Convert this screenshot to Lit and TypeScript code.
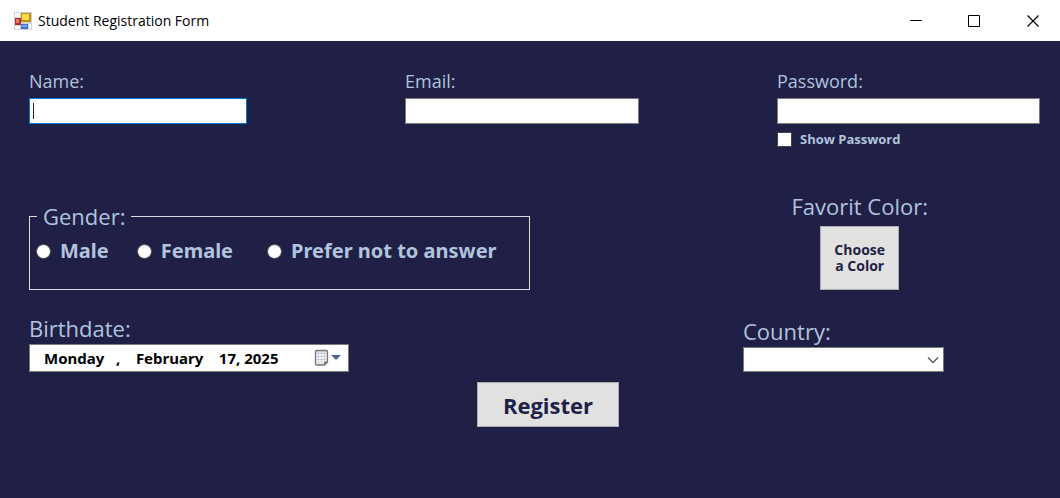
import { LitElement, html, css, svg } from "lit";
import { customElement, state } from "lit/decorators.js";

const formIcon = svg`
  <rect x="0" y="0" width="18" height="18" fill="#d2d2d2"/>
  <rect x="1" y="1" width="5" height="4" fill="#fff"/>
  <rect x="1" y="14" width="5" height="3" fill="#fff"/>
  <rect x="15" y="12" width="2" height="5" fill="#fff"/>
  <rect x="1" y="6" width="6" height="7" fill="#b03030"/>
  <rect x="2" y="7" width="3" height="4" fill="#e08070"/>
  <rect x="7" y="1" width="10" height="9" fill="#c09010"/>
  <rect x="8" y="2" width="7" height="6" fill="#fbd850"/>
  <rect x="7" y="12" width="7" height="5" fill="#4272cc"/>
  <rect x="8" y="13" width="5" height="2" fill="#7ba4ee"/>`;

@customElement("app-root")
export class AppRoot extends LitElement {
  @state() private showPassword = false;

  static styles = css`
    :host {
      display: flex;
      flex-direction: column;
      min-height: 100vh;
      background: #201f45;
      color: #b0c4de;
      font-family: "Open Sans", "Noto Sans", sans-serif;
    }
    * { box-sizing: border-box; }
    button, input, select { font: inherit; margin: 0; border-radius: 0; }
    .titlebar {
      display: flex;
      align-items: center;
      height: 41px;
      padding-left: 14px;
      background: #fff;
      color: #000;
    }
    .app-icon { width: 18px; height: 18px; margin-right: 6px; }
    .title {
      flex: 1;
      margin: 0;
      font-size: 14px;
      font-weight: 400;
      line-height: 20px;
    }
    .window-button {
      display: grid;
      place-items: center;
      width: 58px;
      height: 40px;
      padding: 0;
      border: 0;
      background: none;
    }
    .window-button:last-child { width: 57px; padding-left: 3px; }
    form {
      display: flex;
      flex-direction: column;
      padding: 28px 20px 24px 29px;
    }
    .accounts {
      display: grid;
      grid-template-columns: 376fr 372fr 263fr;
      margin-bottom: 41px;
    }
    .field { display: flex; flex-direction: column; align-items: flex-start; }
    .label { font-size: 18px; line-height: 24px; margin-bottom: 5px; }
    .large { font-size: 22px; line-height: 28px; margin-bottom: 2px; }
    .box {
      width: 100%;
      height: 26px;
      padding: 0 4px;
      border: 1px solid #7a7a7a;
      background: #fff;
      color: #000;
      outline: none;
    }
    .name { width: 58%; }
    .email { width: 63%; }
    .active {
      border-color: #0078d7;
      background: linear-gradient(#222, #222) 3px 4px / 1px 16px no-repeat #fff;
    }
    .check {
      display: flex;
      align-items: center;
      gap: 8px;
      height: 24px;
      margin-top: 3px;
      font-size: 13px;
      font-weight: 700;
    }
    .check input, .radio input {
      appearance: none;
      width: 15px;
      height: 15px;
      border: 1px solid #444;
      background: #fff;
    }
    .check input:checked { background: #b0c4de; }
    .row {
      display: flex;
      justify-content: space-between;
      align-items: flex-end;
    }
    .gender {
      width: 501px;
      min-width: 0;
      height: 88px;
      margin: 0;
      padding: 0 6px;
      border: 1px solid #dcdcdc;
    }
    .gender legend {
      margin-left: 1px;
      padding: 0 6px;
      font-size: 22px;
      line-height: 28px;
    }
    .options { display: flex; gap: 28px; padding-top: 6px; }
    .radio {
      display: flex;
      align-items: center;
      gap: 9px;
      font-family: "Noto Sans", sans-serif;
      font-size: 20px;
      font-weight: 700;
      line-height: 30px;
      white-space: nowrap;
    }
    .radio:last-child { margin-left: 6px; }
    .radio input { border-radius: 50%; }
    .radio input:checked { border: 4px solid #fff; background: #201f45; }
    .color { align-items: center; margin-right: 112px; }
    .color .large { margin-bottom: 6px; }
    .push {
      border: 1px solid #adadad;
      background: #e1e1e1;
      color: #201f45;
      font-weight: 700;
    }
    .choose {
      width: 79px;
      height: 64px;
      padding: 0 8px;
      font-size: 14px;
      line-height: 16px;
    }
    .dates { margin-top: 24px; }
    .picker {
      display: flex;
      align-items: center;
      width: 320px;
      height: 28px;
      border: 1px solid #7a7a7a;
      background: #fff;
    }
    .date {
      flex: 1;
      min-width: 0;
      padding: 0 0 0 14px;
      border: 0;
      outline: none;
      background: none;
      color: #000;
      font-family: "Noto Sans", sans-serif;
      font-size: 15px;
      font-weight: 700;
    }
    .drop { display: flex; padding: 0 7px 0 0; border: 0; background: none; }
    .country { width: 201px; margin-right: 96px; }
    .select-wrap { display: grid; width: 100%; align-items: center; }
    .select-wrap > * { grid-area: 1 / 1; }
    .select-wrap select { appearance: none; height: 25px; }
    .select-wrap svg { justify-self: end; margin-right: 5px; pointer-events: none; }
    .register {
      align-self: center;
      width: 142px;
      height: 45px;
      margin: 10px 0 0 27px;
      padding: 0;
      font-size: 22px;
      line-height: 28px;
    }
  `;

  private toggle(e: Event) {
    this.showPassword = (e.target as HTMLInputElement).checked;
  }

  render() {
    return html`
      <header class="titlebar">
        <svg class="app-icon" viewBox="0 0 18 18" aria-hidden="true">${formIcon}</svg>
        <h1 class="title">Student Registration Form</h1>
        <button class="window-button" aria-label="Minimize">
          <svg width="12" height="12"><path d="M0 5.5h12" stroke="#000"/></svg>
        </button>
        <button class="window-button" aria-label="Maximize">
          <svg width="12" height="12"><path d="M.5.5h11v11H.5z" fill="none" stroke="#000"/></svg>
        </button>
        <button class="window-button" aria-label="Close">
          <svg width="12" height="12"><path d="M.5.5l11 11M11.5.5l-11 11" stroke="#000" stroke-width="1.1"/></svg>
        </button>
      </header>
      <form @submit=${(e: Event) => e.preventDefault()}>
        <div class="accounts">
          <div class="field">
            <label class="label" for="name">Name:</label>
            <input class="box name active" id="name" type="text" />
          </div>
          <div class="field">
            <label class="label" for="email">Email:</label>
            <input class="box email" id="email" type="email" />
          </div>
          <div class="field">
            <label class="label" for="password">Password:</label>
            <input class="box" id="password" type=${this.showPassword ? "text" : "password"} />
            <label class="check">
              <input type="checkbox" .checked=${this.showPassword} @change=${this.toggle} />
              Show Password
            </label>
          </div>
        </div>
        <div class="row">
          <fieldset class="gender">
            <legend>Gender:</legend>
            <div class="options">
              ${["Male", "Female", "Prefer not to answer"].map(
                (name) => html`<label class="radio"><input type="radio" name="gender" value=${name} />${name}</label>`
              )}
            </div>
          </fieldset>
          <div class="field color">
            <label class="large" for="color">Favorit Color:</label>
            <button class="push choose" id="color" type="button">Choose a Color</button>
          </div>
        </div>
        <div class="row dates">
          <div class="field">
            <label class="large" for="birthdate">Birthdate:</label>
            <div class="picker">
              <input class="date" id="birthdate" type="text" .value=${"Monday   ,    February    17, 2025"} />
              <button class="drop" type="button" aria-label="Open calendar">
                <svg width="27" height="18" viewBox="0 0 27 18">
                  <path d="M2.500 1.500h10q1 0 1 1v10.500l-3 3h-8q-1 0-1-1v-12.500q0-1 1-1z" fill="#e2e2e7" stroke="#7d7880" stroke-width="1.300"/>
                  <path d="M3 4h9v8.500H3z" fill="#fff"/>
                  <path d="M3 4.500h9M3 7.500h9M3 10.500h9M4.500 4v8.500M7.500 4v8.500M10.500 4v8.500" fill="none" stroke="#c6cad6"/>
                  <path d="M10.500 16v-3h3z" fill="#8f8b94" stroke="#77737c"/>
                  <path d="M17 6h10l-5 5z" fill="#4a6291"/>
                </svg>
              </button>
            </div>
          </div>
          <div class="field country">
            <label class="large" for="country">Country:</label>
            <div class="select-wrap">
              <select class="box" id="country"><option></option></select>
              <svg width="12" height="8"><path d="M1 1.500l5 5 5-5" fill="none" stroke="#555" stroke-width="1.300"/></svg>
            </div>
          </div>
        </div>
        <button class="push register" type="submit">Register</button>
      </form>
    `;
  }
}
